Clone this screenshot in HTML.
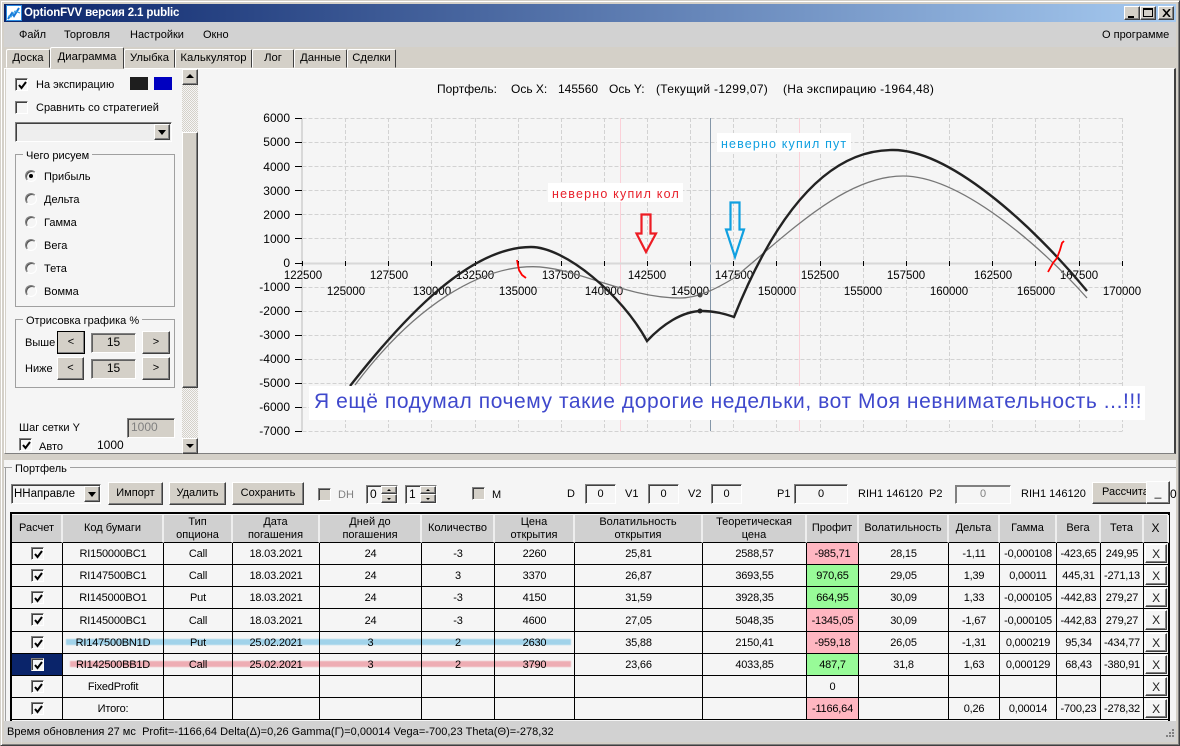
<!DOCTYPE html>
<html lang="ru"><head><meta charset="utf-8"><title>OptionFVV</title>
<style>
*{box-sizing:border-box}
html,body{margin:0;padding:0}
body{width:1180px;height:746px;position:relative;overflow:hidden;background:#d4d0c8;font:11px/13px "Liberation Sans","Noto Sans CJK SC",sans-serif;color:#000}
.a{position:absolute}
.t{position:absolute;white-space:nowrap}
.btn{position:absolute;background:#d4d0c8;border:1px solid;border-color:#fff #404040 #404040 #fff;box-shadow:inset -1px -1px #808080;text-align:center;white-space:nowrap;overflow:hidden}
.sunk{position:absolute;background:#f5f5f5;border:1px solid;border-color:#808080 #fff #fff #808080;box-shadow:inset 1px 1px #404040;text-align:center;white-space:nowrap;overflow:hidden}
.dis{background:#d4d0c8;color:#808080}
.cb{position:absolute;width:13px;height:13px;background:#f5f5f5;border:1px solid;border-color:#808080 #fff #fff #808080;box-shadow:inset 1px 1px #404040}
.cb svg{position:absolute;left:1px;top:1px}
.rd{position:absolute;width:12px;height:12px;border-radius:50%;background:#f5f5f5;border:1px solid;border-color:#808080 #fff #fff #808080;box-shadow:inset 1px 1px #505050}
.grp{position:absolute;border:1px solid #a0a0a0}
.lg{position:absolute;background:#f5f5f5;padding:0 3px;white-space:nowrap}
.tab{position:absolute;top:49px;height:19px;background:#d4d0c8;border:1px solid;border-color:#fff #404040 transparent #fff;border-radius:2px 2px 0 0;text-align:center;line-height:17px;white-space:nowrap;font-size:11.3px}
.tri{position:absolute;width:0;height:0;border-left:4px solid transparent;border-right:4px solid transparent}
table{border-collapse:separate;border-spacing:0;table-layout:fixed;position:absolute;left:12px;top:515px;width:1157px;background:#f5f5f5}
th{font-weight:normal;background:#d0d0d0;border-right:2px solid #eee;border-bottom:1px solid #000;height:28px;padding:0;line-height:13px;text-align:center;overflow:hidden}
td{border-right:1px solid #000;border-bottom:1px solid #000;padding:2px 0 0;text-align:center;white-space:nowrap;overflow:hidden;position:relative;letter-spacing:-.2px}
td:first-child{padding:0}
.chk{display:inline-block;position:relative;width:13px;height:13px;background:#f5f5f5;border:1px solid;border-color:#808080 #fff #fff #808080;box-shadow:inset 1px 1px #404040;vertical-align:middle}
.chk svg{position:absolute;left:1px;top:1px}
.x{position:absolute;left:1px;top:1px;right:1px;bottom:1px;border:1px solid;border-color:#fff #404040 #404040 #fff;box-shadow:inset -1px -1px #808080;background:#f5f5f5;font-size:12px;line-height:18px;text-align:center;color:#222}
.p{background:#ffb6c1}.g{background:#98fb98}
</style></head><body>
<!-- window frame -->
<div class="a" style="left:0;top:0;width:1180px;height:746px;border:1px solid;border-color:#d4d0c8 #404040 #404040 #d4d0c8;box-shadow:inset 1px 1px #fff,inset -1px -1px #808080"></div>
<!-- title -->
<div class="a" style="left:4px;top:4px;width:1172px;height:18px;background:linear-gradient(90deg,#0a246a,#a6caf0)"></div>
<svg class="a" style="left:6px;top:5px" width="16" height="16"><rect width="16" height="16" fill="#fff"/><rect x="0" y="0" width="16" height="16" fill="none" stroke="#2a8be0" stroke-width="2"/><path d="M2 14L6 8L8 11L13 3" fill="none" stroke="#1878d8" stroke-width="2"/><path d="M2 11L5 12L9 6L14 8" fill="none" stroke="#30a0e8" stroke-width="1"/></svg>
<div class="t" style="left:24px;top:6px;color:#fff;font-weight:bold;font-size:11.5px;line-height:15px;letter-spacing:-.15px">OptionFVV версия 2.1 public</div>
<div class="btn" style="left:1124px;top:6px;width:16px;height:14px"><div class="a" style="left:3px;top:9px;width:6px;height:2px;background:#000"></div></div>
<div class="btn" style="left:1140px;top:6px;width:16px;height:14px"><div class="a" style="left:2px;top:1px;width:10px;height:9px;border:1px solid #000;border-top-width:2px"></div></div>
<div class="btn" style="left:1158px;top:6px;width:16px;height:14px"><svg class="a" style="left:3px;top:2px" width="9" height="8"><path d="M1 0L8 8M8 0L1 8" stroke="#000" stroke-width="1.6"/></svg></div>
<!-- menu -->
<div class="a" style="left:4px;top:22px;width:1172px;height:25px;background:#d2d2d2"></div>
<div class="t" style="left:19px;top:29px">Файл</div>
<div class="t" style="left:64px;top:29px">Торговля</div>
<div class="t" style="left:130px;top:29px">Настройки</div>
<div class="t" style="left:203px;top:29px">Окно</div>
<div class="t" style="left:1102px;top:29px">О программе</div>
<!-- tabs -->
<div class="tab" style="left:6px;width:44px">Доска</div>
<div class="tab" style="left:50px;width:74px;top:47px;height:22px;z-index:3;line-height:18px">Диаграмма</div>
<div class="tab" style="left:124px;width:51px">Улыбка</div>
<div class="tab" style="left:175px;width:77px">Калькулятор</div>
<div class="tab" style="left:252px;width:42px">Лог</div>
<div class="tab" style="left:294px;width:53px">Данные</div>
<div class="tab" style="left:347px;width:49px">Сделки</div>
<!-- main panel -->
<div class="a" style="left:4px;top:68px;width:1172px;height:386px;background:#f5f5f5;border:1px solid;border-color:#fff #404040 #808080 #fff;border-right-width:2px;box-shadow:inset 1px 0 #d4d0c8"></div>
<!-- left controls -->
<div class="cb" style="left:15px;top:78px"><svg width="11" height="11"><path d="M2 5L4.5 8L9 2" fill="none" stroke="#000" stroke-width="2"/></svg></div>
<div class="t" style="left:36px;top:79px">На экспирацию</div>
<div class="a" style="left:130px;top:77px;width:18px;height:13px;background:#1e1e1e"></div>
<div class="a" style="left:154px;top:77px;width:18px;height:13px;background:#0000c0"></div>
<div class="cb" style="left:15px;top:101px"></div>
<div class="t" style="left:36px;top:102px">Сравнить со стратегией</div>
<div class="sunk" style="left:15px;top:122px;width:157px;height:20px;background:#eee"></div>
<div class="btn" style="left:154px;top:124px;width:16px;height:16px"><div class="tri" style="left:3px;top:5px;border-top:5px solid #000"></div></div>
<div class="grp" style="left:15px;top:154px;width:160px;height:153px"></div>
<div class="lg" style="left:23px;top:150px">Чего рисуем</div>
<div class="rd" style="left:25px;top:170px"><div class="a" style="left:3px;top:3px;width:4px;height:4px;background:#000;border-radius:50%"></div></div><div class="t" style="left:44px;top:171px">Прибыль</div>
<div class="rd" style="left:25px;top:193px"></div><div class="t" style="left:44px;top:194px">Дельта</div>
<div class="rd" style="left:25px;top:216px"></div><div class="t" style="left:44px;top:217px">Гамма</div>
<div class="rd" style="left:25px;top:239px"></div><div class="t" style="left:44px;top:240px">Вега</div>
<div class="rd" style="left:25px;top:262px"></div><div class="t" style="left:44px;top:263px">Тета</div>
<div class="rd" style="left:25px;top:285px"></div><div class="t" style="left:44px;top:286px">Вомма</div>
<div class="grp" style="left:15px;top:319px;width:160px;height:69px"></div>
<div class="lg" style="left:23px;top:315px">Отрисовка графика %</div>
<div class="t" style="left:25px;top:337px">Выше</div>
<div class="btn" style="left:57px;top:331px;width:28px;height:23px;outline:1px solid #000;outline-offset:-1px;line-height:20px">&lt;</div>
<div class="sunk dis" style="left:91px;top:333px;width:45px;height:20px;color:#000;font-size:12px;line-height:17px;box-shadow:inset 1px 1px #606060">15</div>
<div class="btn" style="left:142px;top:331px;width:28px;height:23px;line-height:20px">&gt;</div>
<div class="t" style="left:25px;top:363px">Ниже</div>
<div class="btn" style="left:57px;top:357px;width:27px;height:23px;line-height:20px">&lt;</div>
<div class="sunk dis" style="left:91px;top:359px;width:45px;height:20px;color:#000;font-size:12px;line-height:17px;box-shadow:inset 1px 1px #606060">15</div>
<div class="btn" style="left:142px;top:357px;width:28px;height:23px;line-height:20px">&gt;</div>
<div class="t" style="left:19px;top:422px">Шаг сетки Y</div>
<div class="sunk dis" style="left:127px;top:418px;width:48px;height:20px;text-align:left;padding-left:3px;line-height:17px;font-size:12px">1000</div>
<div class="cb" style="left:19px;top:438px"><svg width="11" height="11"><path d="M2 5L4.5 8L9 2" fill="none" stroke="#000" stroke-width="2"/></svg></div>
<div class="t" style="left:39px;top:441px">Авто</div>
<div class="t" style="left:97px;top:439px;font-size:12px">1000</div>
<!-- scrollbar -->
<div class="a" style="left:182px;top:69px;width:16px;height:385px;background:repeating-conic-gradient(#d4d0c8 0 25%,#f5f5f5 0 50%) 0 0/2px 2px"></div>
<div class="btn" style="left:182px;top:69px;width:16px;height:16px"><div class="tri" style="left:3px;top:4px;border-bottom:4px solid #000"></div></div>
<div class="btn" style="left:182px;top:132px;width:16px;height:256px"></div>
<div class="btn" style="left:182px;top:438px;width:16px;height:16px"><div class="tri" style="left:3px;top:5px;border-top:4px solid #000"></div></div>
<!-- chart -->
<svg class="a" style="left:198px;top:69px" width="976" height="384" viewBox="198 69 976 384">
<g font-family="Liberation Sans" font-size="12" fill="#000" letter-spacing=".3">
<text x="437" y="93" letter-spacing="0">Портфель:</text><text x="511" y="93" letter-spacing="0">Ось X:</text><text x="558" y="93" letter-spacing="0">145560</text><text x="609" y="93" letter-spacing="0">Ось Y:</text><text x="656" y="93">(Текущий -1299,07)</text><text x="783" y="93">(На экспирацию -1964,48)</text>
</g>
<path d="M302.5 142.5H1122.5M302.5 166.5H1122.5M302.5 190.5H1122.5M302.5 214.5H1122.5M302.5 238.5H1122.5M302.5 118.5H1122.5M302.5 287.5H1122.5M302.5 311.5H1122.5M302.5 335.5H1122.5M302.5 359.5H1122.5M302.5 383.5H1122.5M302.5 407.5H1122.5M302.5 431.5H1122.5M345.5 118V431M388.5 118V431M431.5 118V431M475.5 118V431M518.5 118V431M561.5 118V431M604.5 118V431M647.5 118V431M690.5 118V431M733.5 118V431M776.5 118V431M820.5 118V431M863.5 118V431M906.5 118V431M949.5 118V431M992.5 118V431M1035.5 118V431M1079.5 118V431M1122.5 118V431" fill="none" stroke="#d2d2d2" stroke-dasharray="4 2"/>
<path d="M620.5 118V431M799.5 118V431" stroke="#fbd0d8" stroke-width="1"/>
<path d="M710.5 118V431" stroke="#8496a8" stroke-width="1"/>
<path d="M302 118V431" stroke="#d8d8d8" stroke-width="2"/>
<path d="M302 263.5H1122" stroke="#d8d8d8" stroke-width="2"/>
<path d="M295 118.5H302M295 142.5H302M295 166.5H302M295 190.5H302M295 214.5H302M295 238.5H302M295 263.5H302M295 287.5H302M295 311.5H302M295 335.5H302M295 359.5H302M295 383.5H302M295 407.5H302M295 431.5H302M302.5 261V266M345.5 261V266M388.5 261V266M431.5 261V266M475.5 261V266M518.5 261V266M561.5 261V266M604.5 261V266M647.5 261V266M690.5 261V266M733.5 261V266M776.5 261V266M820.5 261V266M863.5 261V266M906.5 261V266M949.5 261V266M992.5 261V266M1035.5 261V266M1079.5 261V266M1122.5 261V266" stroke="#000" stroke-width="1"/>
<g font-family="Liberation Sans" font-size="12" fill="#000" text-anchor="end">
<text x="290" y="122">6000</text><text x="290" y="146">5000</text><text x="290" y="171">4000</text><text x="290" y="195">3000</text><text x="290" y="219">2000</text><text x="290" y="243">1000</text><text x="290" y="267">0</text><text x="290" y="291">-1000</text><text x="290" y="315">-2000</text><text x="290" y="339">-3000</text><text x="290" y="363">-4000</text><text x="290" y="387">-5000</text><text x="290" y="411">-6000</text><text x="290" y="435">-7000</text>
</g>
<g font-family="Liberation Sans" font-size="11.5" fill="#000" text-anchor="middle">
<text x="303" y="279">122500</text><text x="389" y="279">127500</text><text x="475" y="279">132500</text><text x="561" y="279">137500</text><text x="647" y="279">142500</text><text x="734" y="279">147500</text><text x="820" y="279">152500</text><text x="906" y="279">157500</text><text x="993" y="279">162500</text><text x="1079" y="279">167500</text>
<text x="346" y="295">125000</text><text x="432" y="295">130000</text><text x="518" y="295">135000</text><text x="604" y="295">140000</text><text x="690" y="295">145000</text><text x="777" y="295">150000</text><text x="863" y="295">155000</text><text x="949" y="295">160000</text><text x="1036" y="295">165000</text><text x="1122" y="295">170000</text>
</g>
<path d="M355 385C415 305 480 266.7 533 266.7C575 266.7 625 298 680 298C698 298 716 289 734 278C790 232 845 176 903 176C960 176 1040 245 1087 298" fill="none" stroke="#777" stroke-width="1.3"/>
<path d="M350 386C405 316 470 247 531 247C565 247 622 295 647 341C662 325 682 311 702 311C715 311 725 314 734 317C765 240 815 150 892 150C948 149 1030 222 1087 291" fill="none" stroke="#222" stroke-width="2.4" stroke-linejoin="miter"/>
<circle cx="700" cy="311" r="2.5" fill="#222"/><circle cx="700" cy="295" r="2.5" fill="#444"/>
<path d="M517 260L519 270L522 275L526 278" fill="none" stroke="#f00" stroke-width="1.8"/>
<path d="M1048 272L1053 263L1057 258L1060 250L1062 243L1064 241" fill="none" stroke="#f00" stroke-width="1.8"/>
<rect x="548" y="183" width="135" height="19" fill="#fff"/>
<text x="552" y="198" font-family="Liberation Sans" font-size="12.5" letter-spacing="1.2" fill="#e8202a">неверно купил кол</text>
<rect x="717" y="133" width="134" height="19" fill="#fff"/>
<text x="721" y="148" font-family="Liberation Sans" font-size="12.5" letter-spacing="1.15" fill="#10a0e0">неверно купил пут</text>
<path d="M641.5 214.5H650.5V233.5H656L646 252L636.5 233.5H641.5Z" fill="none" stroke="#ed1c24" stroke-width="2.2"/>
<path d="M730.5 202.5H739.5V229.5H744L735 257L726 229.5H730.5Z" fill="none" stroke="#10a0e0" stroke-width="2.2"/>
<rect x="309" y="386" width="836" height="34" fill="#fff"/>
<text x="314" y="408" font-family="Liberation Sans" font-size="21" letter-spacing=".57" fill="#3f48cc">Я ещё подумал почему такие дорогие недельки, вот Моя невнимательность ...!!!</text>
</svg>
<!-- splitter + portfolio -->
<div class="a" style="left:4px;top:459px;width:1172px;height:263px;background:#f5f5f5;border-top:1px solid #fff"></div>
<div class="a" style="left:4px;top:454px;width:1172px;height:6px;background:#d4d0c8"></div>
<div class="a" style="left:4px;top:467px;width:1172px;height:1px;background:#a0a0a0"></div>
<div class="a" style="left:5px;top:467px;width:1px;height:255px;background:#a0a0a0"></div>
<div class="lg" style="left:12px;top:463px">Портфель</div>
<div class="sunk" style="left:11px;top:484px;width:90px;height:20px;text-align:left;padding-left:2px;line-height:18px;font-size:11.5px">ННаправле</div>
<div class="btn" style="left:84px;top:486px;width:16px;height:16px"><div class="tri" style="left:3px;top:5px;border-top:5px solid #000"></div></div>
<div class="btn" style="left:108px;top:482px;width:55px;height:23px;line-height:20px">Импорт</div>
<div class="btn" style="left:169px;top:482px;width:57px;height:23px;line-height:20px">Удалить</div>
<div class="btn" style="left:232px;top:482px;width:72px;height:23px;line-height:20px">Сохранить</div>
<div class="cb" style="left:318px;top:488px;background:#d4d0c8"></div><div class="t" style="left:338px;top:489px;color:#808080">DH</div>
<div class="sunk" style="left:366px;top:485px;width:32px;height:19px;text-align:left;padding-left:3px;line-height:17px;font-size:12px">0</div>
<div class="btn" style="left:381px;top:486px;width:16px;height:8px"><div class="tri" style="left:5px;top:2px;border-left-width:2px;border-right-width:2px;border-bottom:2px solid #000"></div></div>
<div class="btn" style="left:381px;top:494px;width:16px;height:9px"><div class="tri" style="left:5px;top:3px;border-left-width:2px;border-right-width:2px;border-top:2px solid #000"></div></div>
<div class="sunk" style="left:405px;top:485px;width:32px;height:19px;text-align:left;padding-left:3px;line-height:17px;font-size:12px">1</div>
<div class="btn" style="left:420px;top:486px;width:16px;height:8px"><div class="tri" style="left:5px;top:2px;border-left-width:2px;border-right-width:2px;border-bottom:2px solid #000"></div></div>
<div class="btn" style="left:420px;top:494px;width:16px;height:9px"><div class="tri" style="left:5px;top:3px;border-left-width:2px;border-right-width:2px;border-top:2px solid #000"></div></div>
<div class="cb" style="left:472px;top:487px;background:#d4d0c8"></div><div class="t" style="left:492px;top:489px">M</div>
<div class="t" style="left:567px;top:488px">D</div><div class="sunk" style="left:585px;top:484px;width:31px;height:20px;line-height:18px">0</div>
<div class="t" style="left:625px;top:488px">V1</div><div class="sunk" style="left:648px;top:484px;width:31px;height:20px;line-height:18px">0</div>
<div class="t" style="left:688px;top:488px">V2</div><div class="sunk" style="left:711px;top:484px;width:31px;height:20px;line-height:18px">0</div>
<div class="t" style="left:777px;top:488px">P1</div><div class="sunk" style="left:794px;top:484px;width:54px;height:20px;line-height:18px">0</div>
<div class="t" style="left:858px;top:488px">RIH1 146120</div><div class="t" style="left:929px;top:488px">P2</div>
<div class="sunk" style="left:955px;top:485px;width:56px;height:19px;line-height:17px;color:#808080;box-shadow:inset 1px 1px #808080">0</div>
<div class="t" style="left:1021px;top:488px">RIH1 146120</div>
<div class="btn" style="left:1092px;top:482px;width:60px;height:22px;line-height:18px;text-align:left;padding-left:9px">Рассчитать</div>
<div class="btn" style="left:1146px;top:481px;width:24px;height:23px;line-height:20px;background:#f5f5f5;font-size:12px">_</div>
<div class="t" style="left:1170px;top:488px;font-size:12px">0</div>
<!-- table -->
<div class="a" style="left:10px;top:512px;width:1160px;height:209px;border-top:2px solid #000;border-left:2px solid #000;border-right:2px solid #000;background:#f5f5f5"></div>
<table>
<colgroup><col style="width:51px"><col style="width:101px"><col style="width:69px"><col style="width:87px"><col style="width:102px"><col style="width:73px"><col style="width:80px"><col style="width:128px"><col style="width:104px"><col style="width:52px"><col style="width:90px"><col style="width:51px"><col style="width:57px"><col style="width:44px"><col style="width:43px"><col style="width:25px"></colgroup>
<tr><th>Расчет</th><th>Код бумаги</th><th>Тип<br>опциона</th><th>Дата<br>погашения</th><th>Дней до<br>погашения</th><th>Количество</th><th>Цена<br>открытия</th><th>Волатильность<br>открытия</th><th>Теоретическая<br>цена</th><th>Профит</th><th>Волатильность</th><th>Дельта</th><th>Гамма</th><th>Вега</th><th>Тета</th><th style="font-size:12px">X</th></tr>
<tr style="height:22px"><td><span class="chk"><svg width="11" height="11"><path d="M2 5L4.5 8L9 2" fill="none" stroke="#000" stroke-width="2"/></svg></span></td><td>RI150000BC1</td><td>Call</td><td>18.03.2021</td><td>24</td><td>-3</td><td>2260</td><td>25,81</td><td>2588,57</td><td class="p">-985,71</td><td>28,15</td><td>-1,11</td><td>-0,000108</td><td>-423,65</td><td>249,95</td><td><div class="x">X</div></td></tr>
<tr style="height:22px"><td><span class="chk"><svg width="11" height="11"><path d="M2 5L4.5 8L9 2" fill="none" stroke="#000" stroke-width="2"/></svg></span></td><td>RI147500BC1</td><td>Call</td><td>18.03.2021</td><td>24</td><td>3</td><td>3370</td><td>26,87</td><td>3693,55</td><td class="g">970,65</td><td>29,05</td><td>1,39</td><td>0,00011</td><td>445,31</td><td>-271,13</td><td><div class="x">X</div></td></tr>
<tr style="height:22px"><td><span class="chk"><svg width="11" height="11"><path d="M2 5L4.5 8L9 2" fill="none" stroke="#000" stroke-width="2"/></svg></span></td><td>RI145000BO1</td><td>Put</td><td>18.03.2021</td><td>24</td><td>-3</td><td>4150</td><td>31,59</td><td>3928,35</td><td class="g">664,95</td><td>30,09</td><td>1,33</td><td>-0,000105</td><td>-442,83</td><td>279,27</td><td><div class="x">X</div></td></tr>
<tr style="height:23px"><td><span class="chk"><svg width="11" height="11"><path d="M2 5L4.5 8L9 2" fill="none" stroke="#000" stroke-width="2"/></svg></span></td><td>RI145000BC1</td><td>Call</td><td>18.03.2021</td><td>24</td><td>-3</td><td>4600</td><td>27,05</td><td>5048,35</td><td class="p">-1345,05</td><td>30,09</td><td>-1,67</td><td>-0,000105</td><td>-442,83</td><td>279,27</td><td><div class="x">X</div></td></tr>
<tr style="height:22px"><td><span class="chk"><svg width="11" height="11"><path d="M2 5L4.5 8L9 2" fill="none" stroke="#000" stroke-width="2"/></svg></span></td><td>RI147500BN1D</td><td>Put</td><td>25.02.2021</td><td>3</td><td>2</td><td>2630</td><td>35,88</td><td>2150,41</td><td class="p">-959,18</td><td>26,05</td><td>-1,31</td><td>0,000219</td><td>95,34</td><td>-434,77</td><td><div class="x">X</div></td></tr>
<tr style="height:22px"><td style="background:#0a246a"><span class="chk"><svg width="11" height="11"><path d="M2 5L4.5 8L9 2" fill="none" stroke="#000" stroke-width="2"/></svg></span></td><td>RI142500BB1D</td><td>Call</td><td>25.02.2021</td><td>3</td><td>2</td><td>3790</td><td>23,66</td><td>4033,85</td><td class="g">487,7</td><td>31,8</td><td>1,63</td><td>0,000129</td><td>68,43</td><td>-380,91</td><td><div class="x">X</div></td></tr>
<tr style="height:22px"><td><span class="chk"><svg width="11" height="11"><path d="M2 5L4.5 8L9 2" fill="none" stroke="#000" stroke-width="2"/></svg></span></td><td>FixedProfit</td><td></td><td></td><td></td><td></td><td></td><td></td><td></td><td>0</td><td></td><td></td><td></td><td></td><td></td><td><div class="x">X</div></td></tr>
<tr style="height:22px"><td><span class="chk"><svg width="11" height="11"><path d="M2 5L4.5 8L9 2" fill="none" stroke="#000" stroke-width="2"/></svg></span></td><td>Итого:</td><td></td><td></td><td></td><td></td><td></td><td></td><td></td><td class="p">-1166,64</td><td></td><td>0,26</td><td>0,00014</td><td>-700,23</td><td>-278,32</td><td><div class="x">X</div></td></tr>
</table>
<div class="a" style="left:66px;top:639px;width:505px;height:6px;background:#a8dcf4;mix-blend-mode:multiply;filter:blur(.6px)"></div>
<div class="a" style="left:70px;top:661px;width:501px;height:6px;background:#f8b4bc;mix-blend-mode:multiply;filter:blur(.6px)"></div>
<!-- status -->
<div class="a" style="left:4px;top:721px;width:1172px;height:21px;background:#d2d2d2"></div>
<div class="t" style="left:7px;top:726px;font-size:11px;letter-spacing:.02px">Время обновления 27 мс&nbsp; Profit=-1166,64 Delta(Δ)=0,26 Gamma(Г)=0,00014 Vega=-700,23 Theta(Θ)=-278,32</div>
<svg class="a" style="left:1162px;top:728px" width="13" height="13"><path d="M10 1h2v2h-2zM7 4h2v2h-2zM10 4h2v2h-2zM4 7h2v2h-2zM7 7h2v2h-2zM10 7h2v2h-2z" fill="#808080"/></svg>
</body></html>
